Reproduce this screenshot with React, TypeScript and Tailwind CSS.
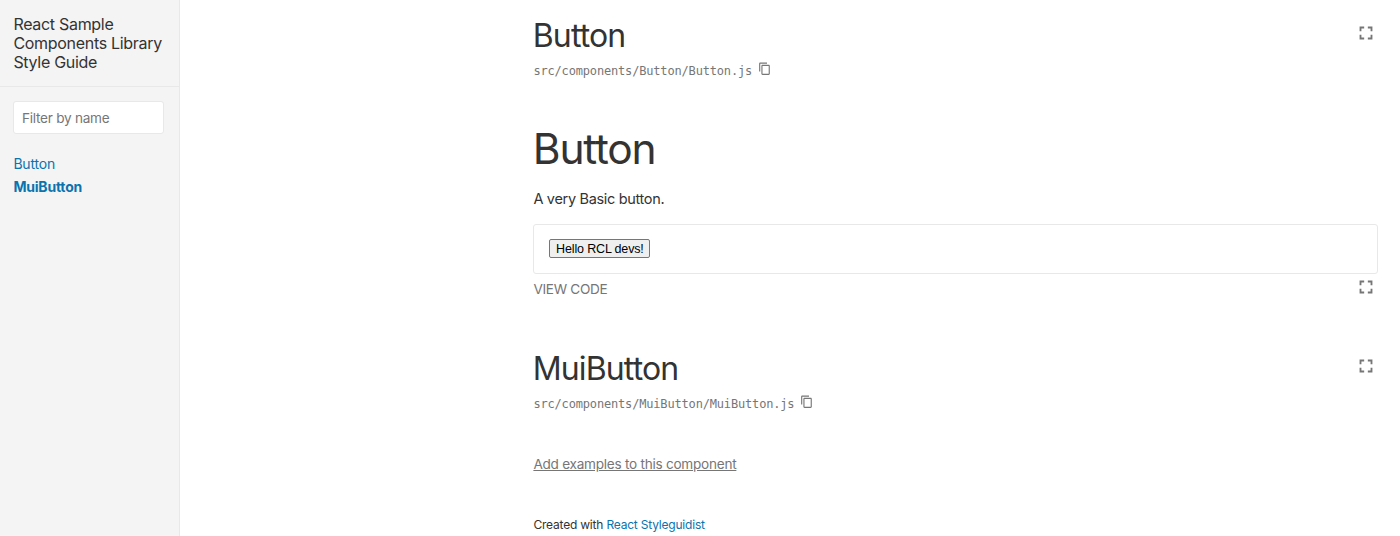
import { MdContentCopy, MdFullscreen } from 'react-icons/md';

function IsolateButton() {
  return (
    <button aria-label="Open isolated" className="flex size-[22px] items-center justify-center text-[#767676]">
      <MdFullscreen className="size-[22px]" />
    </button>
  );
}

function Pathline({ path }: { path: string }) {
  return (
    <div className="flex h-5 items-center font-['DejaVu_Sans_Mono',monospace] text-[12px] leading-5 tracking-[-0.17px] text-[#767676]">
      <span>{path}</span>
      <button aria-label="Copy to clipboard" className="mb-[5px] ml-[6px]">
        <MdContentCopy className="size-[13.5px]" />
      </button>
    </div>
  );
}

function SectionHeading({ name }: { name: string }) {
  return (
    <div className="flex h-11 items-start justify-between pr-[1.4px]">
      <h2 className="-ml-[0.6px] text-[32px] leading-[45px] tracking-[-0.88px]">{name}</h2>
      <div className="pt-[8.5px]">
        <IsolateButton />
      </div>
    </div>
  );
}

function Sidebar() {
  return (
    <aside className="h-full w-[180px] shrink-0 border-r border-[#e8e8e8] bg-[#f4f4f4]">
      <div className="h-[87px] border-b border-[#e8e8e8] pt-[15px] pl-[13.4px]">
        <h1 className="text-[16px] leading-[19px] tracking-[-0.3px]">
          React Sample
          <br />
          Components Library
          <br />
          Style Guide
        </h1>
      </div>
      <div className="pt-[14px] pr-[15px] pl-[13.4px]">
        <input
          placeholder="Filter by name"
          aria-label="Filter by name"
          className="block h-[33px] w-full rounded-[3px] border border-[#e8e8e8] bg-white px-[7.5px] text-[13.6px] tracking-[-0.25px] placeholder:text-[#767676]"
        />
      </div>
      <nav className="flex flex-col pt-[18px] pl-[13.4px] text-[14px] leading-[23px] tracking-[-0.2px] text-[#0b73ae]">
        <a href="#button">Button</a>
        <a href="#muibutton" className="font-bold">MuiButton</a>
      </nav>
    </aside>
  );
}

export default function App() {
  return (
    <div className="flex h-[536px] w-[1400px] overflow-hidden bg-white font-['Inter',sans-serif] text-[#333]">
      <Sidebar />
      <main className="ml-[353.4px] w-[845px] pt-[13px]">
        <section className="h-[333px]">
          <SectionHeading name="Button" />
          <div className="pt-[4px]">
            <Pathline path="src/components/Button/Button.js" />
          </div>
          <h1 className="-ml-[0.6px] mt-[39px] text-[42.5px] leading-[58px] tracking-[-1.2px]">Button</h1>
          <p className="mt-[9px] text-[14.5px] leading-[24px] tracking-[-0.32px]">A very Basic button.</p>
          <div className="mt-[13px] h-[50px] rounded-[3px] border border-[#e8e8e8] py-[14px] pl-[15px]">
            <button className="flex h-[19px] w-[101px] items-center justify-center rounded-[2px] border border-[#767676] bg-[#efefef] pt-px font-['Liberation_Sans',sans-serif] text-[12.5px] leading-none tracking-[-0.15px] text-black">
              Hello RCL devs!
            </button>
          </div>
          <div className="flex h-[28px] items-start justify-between pr-[1.4px]">
            <button className="pt-[5px] text-[13.6px] tracking-[-0.3px] text-[#767676]">VIEW CODE</button>
            <div className="pt-[2px]">
              <IsolateButton />
            </div>
          </div>
        </section>
        <section>
          <SectionHeading name="MuiButton" />
          <div className="pt-[4px]">
            <Pathline path="src/components/MuiButton/MuiButton.js" />
          </div>
          <a href="#examples" className="mt-[39px] block text-[13.6px] leading-[23px] tracking-[-0.26px] text-[#767676] underline">
            Add examples to this component
          </a>
        </section>
        <footer className="mt-[39px] text-[12px] leading-[20px] tracking-[-0.2px]">
          Created with <a href="#styleguidist" className="text-[#0b73ae]">React Styleguidist</a>
        </footer>
      </main>
    </div>
  );
}
